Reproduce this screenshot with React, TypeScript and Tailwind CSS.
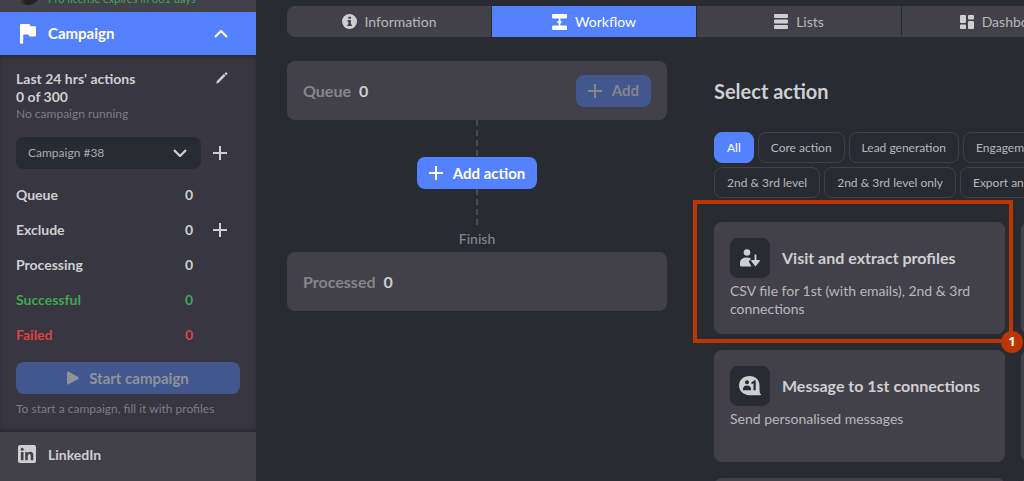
import { useState } from "react";
import type { ReactNode } from "react";

type IconProps = { className?: string };

function FlagIcon() {
  return (
    <svg className="h-5 w-4 flex-none" viewBox="0 0 16 20" fill="currentColor" aria-hidden="true">
      <path d="M0 1.2Q0 0 1.2 0H9q.8 0 1 .8l.4 1.4H15q1 0 1 1v8.3q0 1-1 1H10q-.8 0-1-.8l-.4-1.2H3.2v8.3q0 1-1 1H1q-1 0-1-1z" />
    </svg>
  );
}

function PlusIcon({ className }: IconProps) {
  return (
    <svg className={`h-3.5 w-3.5 flex-none ${className ?? ""}`} viewBox="0 0 14 14" stroke="currentColor" strokeWidth="2" aria-hidden="true">
      <path d="M7 0v14M0 7h14" />
    </svg>
  );
}

function ChevronIcon({ className }: IconProps) {
  return (
    <svg className={`h-2 w-3.5 flex-none ${className ?? ""}`} viewBox="0 0 14 8" fill="none" stroke="currentColor" strokeWidth="2.2" aria-hidden="true">
      <path d="M1 1l6 6 6-6" />
    </svg>
  );
}

function PencilIcon() {
  return (
    <svg className="h-3 w-3" viewBox="0 0 12 12" fill="currentColor" aria-hidden="true">
      <path d="M.3 11.2l.6-2.2L7.8 2.100l1.700 1.700L2.600 10.700.8 11.500zM8.400 1.500l1.100-1q.6-.6 1.200 0l.5.5q.6.6 0 1.200l-1.100 1z" />
    </svg>
  );
}

function PlayIcon() {
  return (
    <svg className="h-3.5 w-3 flex-none" viewBox="0 0 12 14" fill="currentColor" aria-hidden="true">
      <path d="M0 2Q0 0 1.8.8l9 5q1.6 1.2 0 2.4l-9 5Q0 14 0 12z" />
    </svg>
  );
}

function LinkedInIcon() {
  return (
    <svg className="h-[18px] w-[18px] flex-none" viewBox="0 0 18 18" aria-hidden="true">
      <rect width="18" height="18" rx="2" fill="#cfcfd1" />
      <g fill="#42414a">
        <circle cx="4.2" cy="4.3" r="1.5" />
        <path d="M2.9 7h2.6v8.3H2.9zM7.2 7h2.4v1.2q.8-1.4 2.7-1.4 3 0 3 3.6v4.9h-2.6v-4.5q0-1.8-1.3-1.8-1.6 0-1.6 1.9v4.4H7.2z" />
      </g>
    </svg>
  );
}

function InfoIcon() {
  return (
    <svg className="h-[15px] w-[15px] flex-none" viewBox="0 0 15 15" aria-hidden="true">
      <circle cx="7.5" cy="7.5" r="7.5" fill="#cfcfd1" />
      <path d="M6.3 2.8h2.6v2H6.3zM5.5 6h3.4v4.4h1v1.6H5.3v-1.6h1V7.6h-.8z" fill="#42414a" />
    </svg>
  );
}

function WorkflowIcon() {
  return (
    <svg className="h-4 w-[15px] flex-none" viewBox="0 0 15 16" fill="currentColor" aria-hidden="true">
      <rect width="15" height="4.4" rx="1" />
      <rect y="11.6" width="15" height="4.4" rx="1" />
      <path d="M6.7 4h1.6v2.2L10 8 8.3 9.8V12H6.7V9.8L5 8l1.7-1.8z" />
    </svg>
  );
}

function ListsIcon() {
  return (
    <svg className="h-[15px] w-[14px] flex-none" viewBox="0 0 14 15" fill="#cfcfd1" aria-hidden="true">
      <rect width="14" height="4" rx="1" />
      <rect y="5.5" width="14" height="4" rx="1" />
      <rect y="11" width="14" height="4" rx="1" />
    </svg>
  );
}

function DashboardIcon() {
  return (
    <svg className="h-[14px] w-[14px] flex-none" viewBox="0 0 14 14" fill="#cfcfd1" aria-hidden="true">
      <rect width="6" height="8" rx="1" />
      <rect y="9.5" width="6" height="4.5" rx="1" />
      <rect x="8" width="6" height="4.5" rx="1" />
      <rect x="8" y="6" width="6" height="8" rx="1" />
    </svg>
  );
}

function ExtractIcon() {
  return (
    <svg className="h-[18px] w-5" viewBox="0 0 20 18" fill="#cfcfd1" aria-hidden="true">
      <circle cx="7" cy="3.5" r="3.3" />
      <path d="M1.500 17.500Q0 17.500 0 16V14Q0 8.500 7 8.500q2 0 3.500.5v2.500H9.300q-.8.6-.3 1.500l2.500 4.500z" />
      <path d="M14.600 5.500h1.800v5.500h2.800q1 .3.500 1.200L15.500 17.500 11.300 12.200q-.5-.9.500-1.200h2.800z" />
    </svg>
  );
}

function MessageIcon() {
  return (
    <svg className="h-5 w-[22px]" viewBox="0 0 22 20" aria-hidden="true">
      <path d="M10.500 0C16.500 0 20.500 4 20.500 9.500q0 4 .2 6.500.1 1.700 1.300 2.400.5.800-.8.800H10.500C4.500 19.200 0 15 0 9.600S4.500 0 10.500 0z" fill="#cfcfd1" />
      <g fill="#282b32">
        <circle cx="8" cy="6.300" r="2" />
        <path d="M4 13.500q0-4 4-4t4 4v.8H4zM12.500 6.200L15.500 4.300h1.200v10h-2.200V7.200l-2 1z" />
      </g>
    </svg>
  );
}

const stats = [
  { label: "Queue", color: "" },
  { label: "Exclude", color: "", addable: true },
  { label: "Processing", color: "" },
  { label: "Successful", color: "text-[#3fa851]" },
  { label: "Failed", color: "text-[#dc4340]" },
];

const tabs = [
  { label: "Information", icon: <InfoIcon /> },
  { label: "Workflow", icon: <WorkflowIcon /> },
  { label: "Lists", icon: <ListsIcon /> },
  { label: "Dashboard", icon: <DashboardIcon /> },
];

const filterRows = [
  ["All", "Core action", "Lead generation", "Engagement"],
  ["2nd & 3rd level", "2nd & 3rd level only", "Export and import"],
];

function Sidebar() {
  return (
    <aside className="flex w-64 flex-none flex-col bg-[#42414a]">
      <div className="flex h-3 items-end gap-2 overflow-hidden pb-[7px] pl-4">
        <span className="h-6 w-6 flex-none rounded-full bg-linear-to-r from-[#8c4438] to-[#202127] to-40%" />
        <span className="text-[11px] leading-3 whitespace-nowrap text-[#3fa851]">Pro license expires in 661 days</span>
      </div>
      <button className="flex h-[43px] w-full items-center bg-[#5482ff] pr-7 pl-5 text-white">
        <FlagIcon />
        <span className="ml-3 flex-1 text-left text-[15px] font-bold">Campaign</span>
        <ChevronIcon className="rotate-180" />
      </button>

      <section className="bg-[#373641] px-4 pt-[15px] shadow-[inset_0_5px_5px_-3px_#2a2a31,inset_0_-5px_5px_-3px_#2a2a31]">
        <div className="flex justify-between">
          <h2 className="text-[14px] leading-[18px] font-bold">
            Last 24 hrs' actions
            <br />0 of 300
          </h2>
          <button aria-label="Edit limit" className="mr-3 flex h-4 items-center">
            <PencilIcon />
          </button>
        </div>
        <p className="text-[12px] leading-4 text-[#7d7d83]">No campaign running</p>

        <div className="mt-[15px] flex items-center">
          <div className="relative w-[185px]">
            <select aria-label="Campaign" className="h-8 w-full appearance-none rounded-lg bg-[#282b32] px-3 text-[12px] text-[#aaaaad]">
              <option>Campaign #38</option>
            </select>
            <ChevronIcon className="pointer-events-none absolute top-3 right-3.5" />
          </div>
          <button aria-label="New campaign" className="ml-3">
            <PlusIcon />
          </button>
        </div>

        <dl className="mt-2">
          {stats.map((stat) => (
            <div key={stat.label} className={`flex h-[35px] items-center text-[14px] font-bold ${stat.color}`}>
              <dt className="w-[169px]">{stat.label}</dt>
              <dd>0</dd>
              {stat.addable && (
                <dd className="ml-5 flex">
                  <button aria-label="Add to exclude">
                    <PlusIcon />
                  </button>
                </dd>
              )}
            </div>
          ))}
        </dl>

        <button disabled className="mt-2.5 flex h-8 w-full items-center justify-center gap-2.5 rounded-lg bg-[#42578e] text-[15px] font-bold text-[#929298]">
          <PlayIcon />
          Start campaign
        </button>
        <p className="mt-[7px] pb-[15px] text-[12px] leading-4 text-[#7d7d83]">To start a campaign, fill it with profiles</p>
      </section>

      <a href="#linkedin" className="flex h-11 items-center gap-3 pl-[18px] text-[14px] font-bold">
        <LinkedInIcon />
        LinkedIn
      </a>
    </aside>
  );
}

function Connector({ className }: IconProps) {
  return (
    <svg className={`w-0.5 ${className ?? ""}`} aria-hidden="true">
      <line x1="1" x2="1" y1="0" y2="100%" stroke="#484951" strokeWidth="2" strokeDasharray="6 4" />
    </svg>
  );
}

function StageCard({ label, children }: { label: string; children?: ReactNode }) {
  return (
    <div className="flex h-[59px] w-full items-center gap-2 rounded-lg bg-[#42414a] px-4 text-[16px] font-bold">
      <span className="text-[#85858a]">{label}</span>
      <span>0</span>
      {children}
    </div>
  );
}

function Workflow() {
  return (
    <section className="flex w-[380px] flex-none flex-col items-center">
      <StageCard label="Queue">
        <button disabled className="ml-auto flex h-8 items-center gap-2.5 rounded-lg bg-[#42578e] px-3 text-[15px] text-[#85858a]">
          <PlusIcon />
          Add
        </button>
      </StageCard>
      <Connector className="h-[37px]" />
      <button className="flex h-8 items-center gap-2.5 rounded-lg bg-[#5482ff] px-3 text-[15px] font-bold text-white">
        <PlusIcon />
        Add action
      </button>
      <Connector className="h-[37px]" />
      <p className="my-1 text-[14px] leading-[18px] font-medium text-[#85858a]">Finish</p>
      <StageCard label="Processed" />
    </section>
  );
}

type ActionCardProps = {
  icon?: ReactNode;
  title?: string;
  text?: string;
  step?: number;
};

function ActionCard({ icon, title, text, step }: ActionCardProps) {
  return (
    <article className="relative h-28 rounded-lg bg-[#42414a] p-4">
      {title && (
        <>
          <div className="flex items-center gap-3">
            <span className="flex h-10 w-10 flex-none items-center justify-center rounded-lg bg-[#282b32]">{icon}</span>
            <h3 className="text-[16px] font-bold whitespace-nowrap">{title}</h3>
          </div>
          <p className="mt-1 text-[14px] leading-[18px] text-[#b8b8bb]">{text}</p>
        </>
      )}
      {step && (
        <div className="absolute -top-[22px] -right-2 -bottom-[9px] -left-[21px] border-4 border-[#bb3602]">
          <span className="absolute -right-3.5 -bottom-3.5 flex h-[22px] w-[22px] items-center justify-center rounded-full bg-[#bb3602] font-['Open_Sans'] text-[13px] font-bold text-white">
            {step}
          </span>
        </div>
      )}
    </article>
  );
}

function Actions() {
  const [active, setActive] = useState("All");

  return (
    <section className="flex-none">
      <h2 className="mt-[18px] text-[20px] leading-6 font-bold">Select action</h2>
      <div className="mt-[29px] flex flex-col gap-1">
        {filterRows.map((row) => (
          <div key={row[0]} className="flex gap-1">
            {row.map((name) => (
              <button
                key={name}
                onClick={() => setActive(name)}
                className={`h-[31px] flex-none rounded-lg border px-3 text-[12px] ${
                  name === active ? "border-[#5482ff] bg-[#5482ff] text-white" : "border-[#42414a] text-[#b8b8bb]"
                }`}
              >
                {name}
              </button>
            ))}
          </div>
        ))}
      </div>
      <div className="mt-6 grid grid-cols-[291px_291px] gap-4">
        <ActionCard step={1} icon={<ExtractIcon />} title="Visit and extract profiles" text="CSV file for 1st (with emails), 2nd & 3rd connections" />
        <ActionCard />
        <ActionCard icon={<MessageIcon />} title="Message to 1st connections" text="Send personalised messages" />
        <ActionCard />
        <ActionCard />
        <ActionCard />
      </div>
    </section>
  );
}

export default function App() {
  return (
    <div className="flex h-screen overflow-hidden bg-[#282b32] font-[Lato,sans-serif] text-[#cfcfd1]">
      <Sidebar />
      <main className="min-w-0 flex-1 overflow-hidden pt-1.5 pl-[31px]">
        <nav className="flex h-[31px] gap-px">
          {tabs.map((tab) => (
            <button
              key={tab.label}
              className={`flex w-51 flex-none items-center justify-center gap-2 text-[14px] first:rounded-l-lg last:rounded-r-lg ${
                tab.label === "Workflow" ? "bg-[#5482ff] text-white" : "bg-[#42414a] text-[#b8b8bb]"
              }`}
            >
              {tab.icon}
              {tab.label}
            </button>
          ))}
        </nav>
        <div className="mt-6 flex items-start gap-[47px]">
          <Workflow />
          <Actions />
        </div>
      </main>
    </div>
  );
}
